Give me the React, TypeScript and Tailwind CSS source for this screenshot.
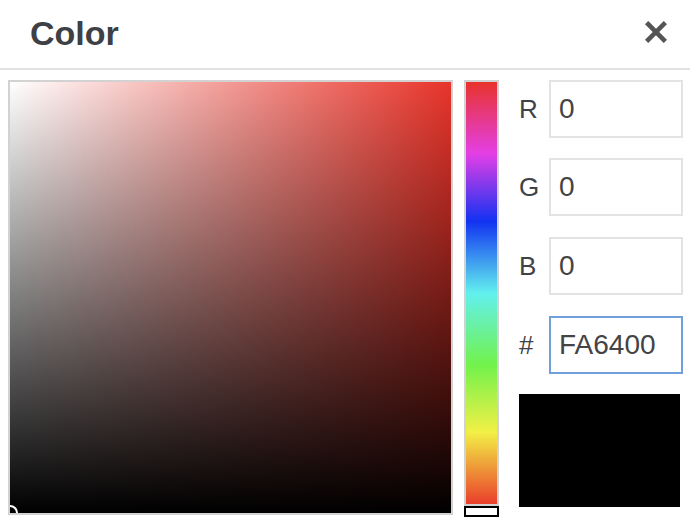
import React from "react";

const rows = [
  { label: "R", value: "0", active: false },
  { label: "G", value: "0", active: false },
  { label: "B", value: "0", active: false },
  { label: "#", value: "FA6400", active: true },
];

function CloseIcon() {
  return (
    <svg width="22" height="22" viewBox="0 0 24 24" className="text-[#555]">
      <path d="M3.5 3.5 L20.5 20.5 M20.5 3.5 L3.5 20.5" stroke="currentColor" strokeWidth="5" strokeLinecap="square" fill="none" />
    </svg>
  );
}

export default function App() {
  return (
    <div className="h-[517px] w-[690px] overflow-hidden bg-white font-['Liberation_Sans',Arial,sans-serif]">
      <header className="flex h-[70px] items-center justify-between border-b-2 border-[#e2e2e2] pl-[30px] pr-[23px]">
        <h1 className="mt-[-2px] text-[34px] font-bold text-[#3d4045]">Color</h1>
        <button className="mt-[-4px]">
          <CloseIcon />
        </button>
      </header>

      <div className="flex pl-[8px] pt-[10px]">
        {/* saturation / value area */}
        <div className="relative h-[435px] w-[445px] overflow-hidden border-2 border-[#d2d2d2] bg-[#e8342a]">
          <div className="absolute inset-0 bg-[linear-gradient(to_right,#ffffff,rgba(255,255,255,0))]" />
          <div className="absolute inset-0 bg-[linear-gradient(to_bottom,rgba(0,0,0,0),#000000)]" />
          <div className="absolute bottom-[-8px] left-[-8px] h-[16px] w-[16px] rounded-full border-2 border-white" />
        </div>

        {/* hue slider */}
        <div className="ml-[11px] flex w-[35px] flex-col">
          <div className="h-[426px] border-2 border-[#d2d2d2] bg-[linear-gradient(to_bottom,#e8332b_0%,#e43fe6_17%,#1232f2_33%,#62f0ee_50%,#72f24c_67%,#f2f046_83%,#ea3e2a_100%)]" />
          <div className="h-[11px] border-2 border-black bg-white" />
        </div>

        {/* inputs */}
        <div className="ml-[20px] flex flex-col">
          {rows.map((row, i) => (
            <div key={row.label} className={`flex h-[58px] items-center ${i === 0 ? "" : i === 1 ? "mt-[20px]" : "mt-[21px]"}`}>
              <span className="w-[30px] text-[26px] text-[#3f4246]">{row.label}</span>
              <div
                className={`flex h-[58px] w-[134px] items-center border-2 px-[8px] text-[28px] text-[#444] ${
                  row.active ? "border-[#6fa0dc]" : "border-[#e3e3e3]"
                }`}
              >
                {row.value}
              </div>
            </div>
          ))}
          <div className="mt-[20px] h-[113px] w-[161px] bg-black" />
        </div>
      </div>
    </div>
  );
}
